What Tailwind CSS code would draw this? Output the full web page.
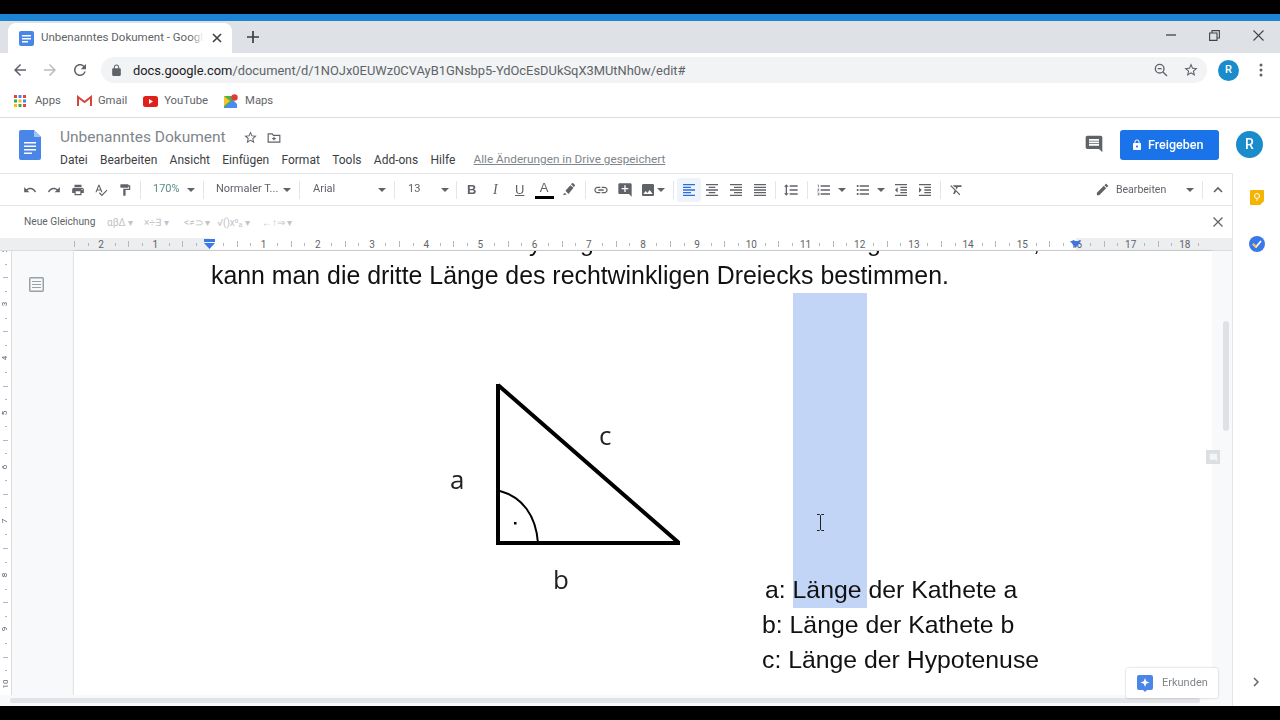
<!DOCTYPE html>
<html lang="de">
<head>
  <meta charset="UTF-8" />
  <title>Unbenanntes Dokument - Google Docs</title>
  <script src="https://cdn.jsdelivr.net/npm/@tailwindcss/browser@4"></script>
</head>
<body class="bg-black overflow-hidden">
<div class="w-[1280px] h-[720px] flex flex-col font-['Roboto',sans-serif] text-[#444746] overflow-hidden blur-[0.35px]">

  <!-- video letterbox + window edge -->
  <div class="h-[14px] bg-black shrink-0"></div>
  <div class="h-[7px] bg-[#1d83d4] shrink-0"></div>

  <!-- tab strip -->
  <div class="h-[32px] bg-[#dee1e6] flex shrink-0">
    <div class="ml-[8px] mt-[2px] w-[224px] h-[30px] bg-white rounded-t-lg flex items-center">
      <svg class="ml-[11px] w-[15px] h-[15px]" viewBox="0 0 15 15"><rect width="15" height="15" rx="2" fill="#4a86e8"/><path d="M3 4h9v1.4H3zM3 7h9v1.4H3zM3 10h6v1.4H3z" fill="#fff"/></svg>
      <span class="relative ml-[7px] w-[163px] text-[11.5px] text-[#5f6368] whitespace-nowrap overflow-hidden">Unbenanntes Dokument - Googl<span class="absolute right-0 top-0 bottom-0 w-[14px] bg-linear-to-r from-white/0 to-white"></span></span>
      <svg class="ml-[8px] w-[10px] h-[10px]" viewBox="0 0 10 10"><path d="M1 1l8 8M9 1l-8 8" stroke="#3c4043" stroke-width="1.6"/></svg>
    </div>
    <svg class="ml-[15px] mt-[10px] w-[12px] h-[12px]" viewBox="0 0 12 12"><path d="M6 0v12M0 6h12" stroke="#3c4043" stroke-width="1.7"/></svg>
    <div class="ml-auto flex items-start">
      <svg class="mt-[13px] w-[10px] h-[2px]" viewBox="0 0 10 2"><path d="M0 1h10" stroke="#444" stroke-width="1.3"/></svg>
      <svg class="ml-[33px] mt-[9px] w-[11px] h-[11px]" viewBox="0 0 11 11"><path d="M.6 3h7.4v7.4H.6zM3 3V.6h7.4V8H8" fill="none" stroke="#444" stroke-width="1.1"/></svg>
      <svg class="ml-[33px] mr-[16px] mt-[9px] w-[11px] h-[11px]" viewBox="0 0 11 11"><path d="M.5.5l10 10M10.5.5l-10 10" stroke="#444" stroke-width="1.1"/></svg>
    </div>
  </div>

  <!-- address bar -->
  <div class="h-[34px] bg-white flex items-center shrink-0">
    <svg class="ml-[11px] w-[18px] h-[18px]" viewBox="0 0 24 24" fill="#5f6368"><path d="M20 11H7.83l5.59-5.59L12 4l-8 8 8 8 1.41-1.41L7.83 13H20v-2z"/></svg>
    <svg class="ml-[12px] w-[18px] h-[18px]" viewBox="0 0 24 24" fill="#babcbe"><path d="M12 4l-1.41 1.41L16.17 11H4v2h12.17l-5.58 5.59L12 20l8-8z"/></svg>
    <svg class="ml-[12px] w-[18px] h-[18px]" viewBox="0 0 24 24" fill="#5f6368"><path d="M17.65 6.35C16.2 4.9 14.21 4 12 4c-4.42 0-7.99 3.58-7.99 8s3.57 8 7.99 8c3.73 0 6.84-2.55 7.73-6h-2.08c-.82 2.33-3.04 4-5.65 4-3.31 0-6-2.69-6-6s2.69-6 6-6c1.66 0 3.14.69 4.22 1.78L13 11h7V4l-2.35 2.35z"/></svg>
    <div class="ml-[12px] w-[1106px] h-[26px] rounded-full bg-[#f1f3f4] flex items-center">
      <svg class="ml-[9px] w-[13px] h-[13px]" viewBox="0 0 24 24" fill="#5f6368"><path d="M18 8h-1V6c0-2.76-2.24-5-5-5S7 3.24 7 6v2H6c-1.1 0-2 .9-2 2v10c0 1.1.9 2 2 2h12c1.1 0 2-.9 2-2V10c0-1.1-.9-2-2-2zm-2.900 0H8.900V6c0-1.71 1.39-3.100 3.100-3.100 1.71 0 3.100 1.390 3.100 3.100v2z"/></svg>
      <span class="ml-[10px] pt-[1px] text-[12.9px] text-[#5f6368] whitespace-nowrap"><span class="text-[#202124]">docs.google.com</span>/document/d/1NOJx0EUWz0CVAyB1GNsbp5-YdOcEsDUkSqX3MUtNh0w/edit#</span>
      <svg class="ml-auto w-[16px] h-[16px]" viewBox="0 0 24 24" fill="none" stroke="#5f6368" stroke-width="2"><circle cx="10" cy="10" r="6.500"/><path d="M7 10h6M15 15l6 6"/></svg>
      <svg class="ml-[14px] mr-[8px] w-[16px] h-[16px]" viewBox="0 0 24 24" fill="#5f6368"><path d="M22 9.240l-7.190-.62L12 2 9.190 8.630 2 9.240l5.460 4.730L5.820 21 12 17.270 18.180 21l-1.630-7.030L22 9.240zM12 15.400l-3.760 2.270 1-4.280-3.320-2.880 4.380-.38L12 6.100l1.710 4.040 4.380.38-3.320 2.880 1 4.280L12 15.400z"/></svg>
    </div>
    <div class="ml-[11px] w-[21px] h-[21px] rounded-full bg-[#1a8ccb] text-white text-[11px] font-medium flex items-center justify-center">R</div>
    <svg class="ml-[20px] w-[4px] h-[14px]" viewBox="0 0 4 14" fill="#5f6368"><circle cx="2" cy="2" r="1.500"/><circle cx="2" cy="7" r="1.500"/><circle cx="2" cy="12" r="1.500"/></svg>
  </div>

  <!-- bookmarks -->
  <div class="h-[31px] bg-white border-b border-[#dadce0] flex items-center text-[11.3px] text-[#5f6368] shrink-0 pb-[2px]">
    <svg class="ml-[14px] w-[12px] h-[12px]" viewBox="0 0 12 12"><path d="M0 0h3v3H0z" fill="#ea4335"/><path d="M4.500 0h3v3h-3z" fill="#4285f4"/><path d="M9 0h3v3H9z" fill="#ea4335"/><path d="M0 4.500h3v3H0z" fill="#34a853"/><path d="M4.500 4.500h3v3h-3z" fill="#fbbc05"/><path d="M9 4.500h3v3H9z" fill="#4285f4"/><path d="M0 9h3v3H0z" fill="#fbbc05"/><path d="M4.500 9h3v3h-3z" fill="#34a853"/><path d="M9 9h3v3H9z" fill="#ea4335"/></svg>
    <span class="ml-[9px]">Apps</span>
    <svg class="ml-[16px] w-[15px] h-[12px]" viewBox="0 0 15 12" fill="none"><path d="M1 11V2l6.500 5L14 2v9" stroke="#d6453d" stroke-width="2"/></svg>
    <span class="ml-[6px]">Gmail</span>
    <svg class="ml-[16px] w-[15px] h-[11px]" viewBox="0 0 15 11"><rect width="15" height="11" rx="2.500" fill="#e0201b"/><path d="M6 3v5l4-2.500z" fill="#fff"/></svg>
    <span class="ml-[6px]">YouTube</span>
    <svg class="ml-[16px] w-[14px] h-[14px]" viewBox="0 0 14 14"><path d="M0 2h9v12H0z" fill="#4caf50"/><path d="M0 14L9 6l4 4v4z" fill="#4a8af4"/><path d="M0 2l6 5-6 5z" fill="#fbc02d"/><circle cx="10.500" cy="3.500" r="3.200" fill="#e53935"/></svg>
    <span class="ml-[7px]">Maps</span>
  </div>

  <!-- docs header -->
  <div class="h-[55px] bg-white flex shrink-0">
    <svg class="ml-[19px] mt-[12px] w-[22px] h-[30px]" viewBox="0 0 22 30"><path d="M2 0h13l7 7v21a2 2 0 0 1-2 2H2a2 2 0 0 1-2-2V2a2 2 0 0 1 2-2z" fill="#4a86e8"/><path d="M15 0l7 7h-7z" fill="#a1c2fa"/><path d="M5 12h12v1.500H5zM5 15.500h12V17H5zM5 19h12v1.500H5zM5 22.500h8V24H5z" fill="#fff"/></svg>
    <div class="ml-[19px] flex flex-col">
      <div class="flex items-center h-[19px] mt-[10px]">
        <span class="text-[15.5px] text-[#80868b]">Unbenanntes Dokument</span>
        <svg class="ml-[17px] w-[15px] h-[15px]" viewBox="0 0 24 24" fill="#5f6368"><path d="M22 9.240l-7.190-.62L12 2 9.190 8.630 2 9.240l5.460 4.730L5.820 21 12 17.270 18.180 21l-1.630-7.030L22 9.240zM12 15.400l-3.760 2.270 1-4.280-3.320-2.880 4.380-.38L12 6.100l1.710 4.040 4.380.38-3.320 2.880 1 4.280L12 15.400z"/></svg>
        <svg class="ml-[9px] w-[14px] h-[14px]" viewBox="0 0 24 24" fill="none" stroke="#5f6368" stroke-width="2"><path d="M2 5h7l2 2.500h11V19H2zM12 10v6M9 13h6"/></svg>
      </div>
      <div class="flex items-center mt-[4px] text-[12px] text-[#3c4043] gap-[12.3px]">
        <span>Datei</span><span>Bearbeiten</span><span>Ansicht</span><span>Einfügen</span><span>Format</span><span>Tools</span><span>Add-ons</span><span>Hilfe</span>
        <span class="ml-[6px] text-[11.75px] text-[#80868b] underline">Alle Änderungen in Drive gespeichert</span>
      </div>
    </div>
    <div class="ml-auto flex items-start">
      <svg class="mt-[16px] w-[20px] h-[20px]" viewBox="0 0 24 24" fill="#5f6368"><path d="M21.990 4c0-1.100-.89-2-1.990-2H4c-1.100 0-2 .9-2 2v12c0 1.100.9 2 2 2h14l4 4-.01-18zM18 14H6v-2h12v2zm0-3H6V9h12v2zm0-3H6V6h12v2z"/></svg>
      <div class="ml-[16px] mt-[12px] w-[99px] h-[30px] bg-[#1a73e8] rounded-[3px] flex items-center text-white text-[12.500px] font-medium">
        <svg class="ml-[11px] w-[12px] h-[12px]" viewBox="0 0 24 24" fill="#fff"><path d="M18 8h-1V6c0-2.760-2.240-5-5-5S7 3.240 7 6v2H6c-1.100 0-2 .9-2 2v10c0 1.100.9 2 2 2h12c1.100 0 2-.9 2-2V10c0-1.100-.9-2-2-2zm-6 9c-1.100 0-2-.9-2-2s.9-2 2-2 2 .9 2 2-.9 2-2 2zm3.100-9H8.900V6c0-1.710 1.390-3.100 3.100-3.100 1.710 0 3.100 1.390 3.100 3.100v2z"/></svg>
        <span class="ml-[5px]">Freigeben</span>
      </div>
      <div class="ml-[17px] mr-[17px] mt-[13px] w-[27px] h-[27px] rounded-full bg-[#1a8ccb] text-white text-[14px] font-medium flex items-center justify-center">R</div>
    </div>
  </div>

  <!-- main row: editor column + side panel -->
  <div class="flex-1 flex min-h-0">
    <div class="w-[1233px] flex flex-col border-r border-[#e3e5e8] min-h-0">

      <!-- toolbar -->
      <div class="h-[33px] border-y border-[#e3e5e8] bg-white flex items-center text-[11px] text-[#5f6368] shrink-0">
        <svg class="ml-[23px] w-[14px] h-[14px]" viewBox="0 0 24 24" fill="#5f6368"><path d="M12.500 8c-2.650 0-5.050.99-6.900 2.600L2 7v9h9l-3.620-3.620c1.390-1.160 3.160-1.880 5.120-1.880 3.540 0 6.550 2.310 7.600 5.500l2.370-.78C21.080 11.030 17.150 8 12.500 8z"/></svg>
        <svg class="ml-[10px] w-[14px] h-[14px]" viewBox="0 0 24 24" fill="#5f6368"><path d="M18.400 10.600C16.550 8.990 14.150 8 11.500 8c-4.650 0-8.580 3.030-9.960 7.220L3.900 16c1.050-3.190 4.050-5.500 7.600-5.500 1.950 0 3.730.72 5.120 1.880L13 16h9V7l-3.600 3.600z"/></svg>
        <svg class="ml-[10px] w-[14px] h-[14px]" viewBox="0 0 24 24" fill="#5f6368"><path d="M19 8H5c-1.660 0-3 1.340-3 3v6h4v4h12v-4h4v-6c0-1.660-1.340-3-3-3zm-3 11H8v-5h8v5zm3-7c-.55 0-1-.45-1-1s.45-1 1-1 1 .45 1 1-.45 1-1 1zm-1-9H6v4h12V3z"/></svg>
        <svg class="ml-[9px] w-[14px] h-[14px]" viewBox="0 0 24 24" fill="#5f6368"><path d="M12.450 16h2.090L9.430 3H7.570L2.460 16h2.090l1.120-3h5.640l1.140 3zm-6.020-5L8.500 5.480 10.570 11H6.430zm15.160.59l-8.090 8.090L9.830 16l-1.410 1.410 5.090 5.090L23 13l-1.410-1.410z"/></svg>
        <svg class="ml-[10px] w-[14px] h-[14px]" viewBox="0 0 24 24" fill="#5f6368"><path d="M18 4V3c0-.55-.45-1-1-1H5c-.55 0-1 .45-1 1v4c0 .55.45 1 1 1h12c.55 0 1-.45 1-1V6h1v4H9v11c0 .55.45 1 1 1h2c.55 0 1-.45 1-1v-9h8V4h-3z"/></svg>
        <span class="ml-[8px] w-px h-[18px] bg-[#e3e5e8]"></span>
        <span class="ml-[12px] w-[25px] text-[#5f8a8b]">170%</span>
        <span class="ml-[9px] border-x-[4px] border-t-[4px] border-x-transparent border-t-[#5f6368]"></span>
        <span class="ml-[8px] w-px h-[18px] bg-[#e3e5e8]"></span>
        <span class="ml-[12px] w-[62px] whitespace-nowrap">Normaler T...</span>
        <span class="ml-[5px] border-x-[4px] border-t-[4px] border-x-transparent border-t-[#5f6368]"></span>
        <span class="ml-[8px] w-px h-[18px] bg-[#e3e5e8]"></span>
        <span class="ml-[13px] w-[62px]">Arial</span>
        <span class="ml-[3px] border-x-[4px] border-t-[4px] border-x-transparent border-t-[#5f6368]"></span>
        <span class="ml-[8px] w-px h-[18px] bg-[#e3e5e8]"></span>
        <span class="ml-[13px] w-[26px]">13</span>
        <span class="ml-[7px] border-x-[4px] border-t-[4px] border-x-transparent border-t-[#5f6368]"></span>
        <span class="ml-[7px] w-px h-[18px] bg-[#e3e5e8]"></span>
        <span class="ml-[10px] w-[8px] text-[13px] font-bold font-['Liberation_Sans',sans-serif]">B</span>
        <span class="ml-[18px] w-[8px] text-[14px] italic font-['Liberation_Serif',serif]">I</span>
        <span class="ml-[14px] w-[9px] text-[13px] underline font-['Liberation_Sans',sans-serif]">U</span>
        <span class="ml-[10px] w-[20px] h-[20px] flex flex-col items-center text-[13px] leading-[15px] font-['Liberation_Sans',sans-serif]">A<span class="w-[19px] h-[3px] bg-black mt-[1px]"></span></span>
        <svg class="ml-[7px] w-[15px] h-[15px]" viewBox="0 0 24 24" fill="#5f6368"><path d="M3 21l3-4 3 3zM7 14l8-9 5 4-8 10z M16 3.500l1.500-1.500a1.500 1.500 0 0 1 2 0l2.500 2.500a1.500 1.500 0 0 1 0 2L20.500 8z"/></svg>
        <span class="ml-[9px] w-px h-[18px] bg-[#e3e5e8]"></span>
        <svg class="ml-[7px] w-[16px] h-[16px]" viewBox="0 0 24 24" fill="#5f6368"><path d="M3.900 12c0-1.710 1.390-3.100 3.100-3.100h4V7H7c-2.760 0-5 2.240-5 5s2.240 5 5 5h4v-1.900H7c-1.710 0-3.100-1.390-3.100-3.100zM8 13h8v-2H8v2zm9-6h-4v1.900h4c1.710 0 3.100 1.390 3.100 3.100s-1.390 3.100-3.100 3.100h-4V17h4c2.760 0 5-2.240 5-5s-2.240-5-5-5z"/></svg>
        <svg class="ml-[8px] w-[16px] h-[16px]" viewBox="0 0 24 24" fill="#5f6368"><path d="M21.990 4c0-1.100-.89-2-1.990-2H4c-1.100 0-2 .9-2 2v12c0 1.100.9 2 2 2h14l4 4-.01-18zM17 11h-4v4h-2v-4H7V9h4V5h2v4h4v2z"/></svg>
        <svg class="ml-[7px] w-[16px] h-[16px]" viewBox="0 0 24 24" fill="#5f6368"><path d="M21 19V5c0-1.100-.9-2-2-2H5c-1.100 0-2 .9-2 2v14c0 1.100.9 2 2 2h14c1.100 0 2-.9 2-2zM8.500 13.500l2.500 3.010L14.500 12l4.500 6H5l3.500-4.500z"/></svg>
        <span class="ml-[1px] border-x-[4px] border-t-[4px] border-x-transparent border-t-[#5f6368]"></span>
        <span class="ml-[8px] w-px h-[18px] bg-[#e3e5e8]"></span>
        <span class="ml-[3px] w-[24px] h-[24px] rounded-[3px] bg-[#eef3fc] flex items-center justify-center">
          <svg class="w-[16px] h-[16px]" viewBox="0 0 24 24" fill="#2a6fd6"><path d="M15 15H3v2h12v-2zm0-8H3v2h12V7zM3 13h18v-2H3v2zm0 8h18v-2H3v2zM3 3v2h18V3H3z"/></svg>
        </span>
        <svg class="ml-[3px] w-[16px] h-[16px]" viewBox="0 0 24 24" fill="#5f6368"><path d="M7 15v2h10v-2H7zm-4 6h18v-2H3v2zm0-8h18v-2H3v2zm4-6v2h10V7H7zM3 3v2h18V3H3z"/></svg>
        <svg class="ml-[8px] w-[16px] h-[16px]" viewBox="0 0 24 24" fill="#5f6368"><path d="M3 21h18v-2H3v2zm6-4h12v-2H9v2zm-6-4h18v-2H3v2zm6-4h12V7H9v2zM3 3v2h18V3H3z"/></svg>
        <svg class="ml-[8px] w-[16px] h-[16px]" viewBox="0 0 24 24" fill="#5f6368"><path d="M3 21h18v-2H3v2zm0-4h18v-2H3v2zm0-4h18v-2H3v2zm0-4h18V7H3v2zm0-6v2h18V3H3z"/></svg>
        <span class="ml-[7px] w-px h-[18px] bg-[#e3e5e8]"></span>
        <svg class="ml-[7px] w-[16px] h-[16px]" viewBox="0 0 24 24" fill="#5f6368"><path d="M6 7h2.500L5 3.500 1.500 7H4v10H1.500L5 20.500 8.500 17H6V7zm4-2v2h12V5H10zm0 14h12v-2H10v2zm0-6h12v-2H10v2z"/></svg>
        <span class="ml-[8px] w-px h-[18px] bg-[#e3e5e8]"></span>
        <svg class="ml-[8px] w-[16px] h-[16px]" viewBox="0 0 24 24" fill="#5f6368"><path d="M2 17h2v.5H3v1h1v.5H2v1h3v-4H2v1zm1-9h1V4H2v1h1v3zm-1 3h1.800L2 13.100v.9h3v-1H3.200L5 10.900V10H2v1zm5-6v2h14V5H7zm0 14h14v-2H7v2zm0-6h14v-2H7v2z"/></svg>
        <span class="ml-[6px] border-x-[4px] border-t-[4px] border-x-transparent border-t-[#5f6368]"></span>
        <svg class="ml-[9px] w-[16px] h-[16px]" viewBox="0 0 24 24" fill="#5f6368"><path d="M4 10.500c-.83 0-1.500.67-1.500 1.500s.67 1.500 1.500 1.500 1.500-.67 1.500-1.500-.67-1.500-1.500-1.500zm0-6c-.83 0-1.500.67-1.500 1.500S3.170 7.500 4 7.500 5.500 6.830 5.500 6 4.830 4.500 4 4.500zm0 12c-.83 0-1.500.68-1.500 1.500s.68 1.500 1.500 1.500 1.500-.68 1.500-1.500-.67-1.500-1.500-1.500zM7 19h14v-2H7v2zm0-6h14v-2H7v2zm0-8v2h14V5H7z"/></svg>
        <span class="ml-[6px] border-x-[4px] border-t-[4px] border-x-transparent border-t-[#5f6368]"></span>
        <svg class="ml-[8px] w-[16px] h-[16px]" viewBox="0 0 24 24" fill="#5f6368"><path d="M11 17h10v-2H11v2zm-8-5l4 4V8l-4 4zm0 9h18v-2H3v2zM3 3v2h18V3H3zm8 6h10V7H11v2zm0 4h10v-2H11v2z"/></svg>
        <svg class="ml-[8px] w-[16px] h-[16px]" viewBox="0 0 24 24" fill="#5f6368"><path d="M3 21h18v-2H3v2zM3 8v8l4-4-4-4zm8 9h10v-2H11v2zM3 3v2h18V3H3zm8 6h10V7H11v2zm0 4h10v-2H11v2z"/></svg>
        <span class="ml-[7px] w-px h-[18px] bg-[#e3e5e8]"></span>
        <svg class="ml-[8px] w-[15px] h-[15px]" viewBox="0 0 24 24" fill="#5f6368"><path d="M3.270 5L2 6.270l6.970 6.970L6.500 19h3l1.570-3.660L16.730 21 18 19.730 3.550 5.270 3.270 5zM6 5v.18L8.820 8h2.400l-.72 1.680 2.100 2.100L14.210 8H20V5H6z"/></svg>
        <svg class="ml-auto w-[15px] h-[15px]" viewBox="0 0 24 24" fill="#5f6368"><path d="M3 17.250V21h3.750L17.810 9.940l-3.750-3.750L3 17.250zM20.710 7.040c.39-.39.39-1.020 0-1.410l-2.340-2.340c-.39-.39-1.020-.39-1.410 0l-1.830 1.830 3.750 3.750 1.830-1.830z"/></svg>
        <span class="ml-[6px] w-[57px] text-[10.500px]">Bearbeiten</span>
        <span class="ml-[13px] border-x-[4px] border-t-[4px] border-x-transparent border-t-[#5f6368]"></span>
        <span class="ml-[8px] w-px h-[18px] bg-[#e3e5e8]"></span>
        <svg class="ml-[10px] mr-[9px] w-[10px] h-[7px]" viewBox="0 0 10 7" fill="none"><path d="M1 6l4-4 4 4" stroke="#5f6368" stroke-width="1.600"/></svg>
      </div>

      <!-- equation bar -->
      <div class="h-[32px] bg-white flex items-center text-[10.200px] shrink-0">
        <span class="ml-[24px] w-[83px] text-[#5f6368]">Neue Gleichung</span>
        <span class="w-[37px] text-[#c0c3c7] text-[10px] whitespace-nowrap">αβΔ ▾</span>
        <span class="w-[40px] text-[#c0c3c7] text-[10px] whitespace-nowrap">×÷∃ ▾</span>
        <span class="w-[33px] text-[#c0c3c7] text-[10px] whitespace-nowrap">&lt;≠⊃ ▾</span>
        <span class="w-[45px] text-[#c0c3c7] text-[10px] whitespace-nowrap">√()x⁰ₐ ▾</span>
        <span class="text-[#c0c3c7] text-[10px] whitespace-nowrap">←↑⇒ ▾</span>
        <svg class="ml-auto mr-[9px] w-[10px] h-[10px]" viewBox="0 0 10 10"><path d="M.5.5l9 9M9.500.5l-9 9" stroke="#5f6368" stroke-width="1.300"/></svg>
      </div>

      <!-- horizontal ruler -->
      <div class="h-[13px] flex bg-[#eceef0] border-b border-[#dadce0] shrink-0 overflow-hidden">
        <div class="w-[74px]"></div>
        <div id="ruler" class="relative flex-1 flex items-center text-[10px] text-[#5f6368]"></div>
      </div>

      <!-- document viewport -->
      <div class="flex-1 flex min-h-0 relative">
        <!-- vertical ruler -->
        <div id="vruler" class="w-[12px] bg-white border-r border-[#dadce0] flex flex-col items-center overflow-hidden text-[8px] text-[#5f6368]"></div>
        <!-- outline gutter -->
        <div class="w-[62px] bg-[#f8f9fa] flex">
          <svg class="mt-[26px] ml-[17px] w-[15px] h-[15px]" viewBox="0 0 15 15" fill="none" stroke="#9aa0a6"><rect x=".75" y=".75" width="13.500" height="13.500" rx="1" stroke-width="1.500"/><path d="M3 4.500h9M3 7.500h9M3 10.500h9"/></svg>
        </div>
        <!-- page -->
        <div class="relative w-[1138px] bg-white shadow-[0_0_2px_rgba(0,0,0,0.25)] flex flex-col items-start overflow-hidden font-['Liberation_Sans',sans-serif] text-[#111]">
          <!-- selection highlight -->
          <div class="absolute left-[719px] top-[42px] w-[74px] h-[315px] bg-[#c2d5f6]"></div>
          <!-- previous line, only its descenders are still in view -->
          <div class="absolute left-0 top-0 w-full h-[6px] overflow-hidden text-[24.800px] leading-[28px]">
            <span class="absolute left-[455px] top-[-22px]">y</span>
            <span class="absolute left-[506px] top-[-22px]">g</span>
            <span class="absolute left-[793px] top-[-22px]">g</span>
            <span class="absolute left-[959px] top-[-22px]">,</span>
          </div>
          <p class="relative mt-[10px] ml-[137px] text-[24.870px] leading-[28px] whitespace-nowrap">kann man die dritte Länge des rechtwinkligen Dreiecks bestimmen.</p>
          <!-- triangle picture -->
          <svg class="absolute left-[360px] top-[122px] w-[260px] h-[225px]" viewBox="0 0 260 225">
            <path d="M64 11v159M62 170h184M64 12l181 158" fill="none" stroke="#000" stroke-width="4"/>
            <path d="M66 118c22 6 36 24 38 52" fill="none" stroke="#000" stroke-width="2"/>
            <rect x="80" y="149" width="2.500" height="2.500" fill="#000"/>
            <text x="16" y="116" font-family="Open Sans, sans-serif" font-size="26" fill="#222">a</text>
            <text x="165" y="72" font-family="Open Sans, sans-serif" font-size="26" fill="#222">c</text>
            <text x="119" y="216" font-family="Open Sans, sans-serif" font-size="26" fill="#222">b</text>
          </svg>
          <!-- legend -->
          <div class="relative mt-[283px] ml-[688px] text-[24.800px] leading-[35px] whitespace-nowrap">
            <p class="ml-[3px]">a: Länge der Kathete a</p>
            <p>b: Länge der Kathete b</p>
            <p>c: Länge der Hypotenuse</p>
          </div>
          <!-- text cursor -->
          <svg class="absolute left-[742px] top-[263px] w-[9px] h-[17px]" viewBox="0 0 9 17" fill="none" stroke="#222" stroke-width="1"><path d="M1 .5h2.500l1 1 1-1H8M4.500 1.500v14M1 16.500h2.500l1-1 1 1H8"/></svg>
        </div>
        <!-- scroll gutter -->
        <div class="flex-1 bg-[#f8f9fa] relative">
          <div class="absolute right-[3px] top-[70px] w-[6px] h-[110px] bg-[#dfe1e4] rounded-full"></div>
        </div>
        <!-- comment tab -->
        <div class="absolute left-[1206px] top-[199px] w-[14px] h-[14px] bg-[#dcdfe2] flex items-center justify-center">
          <svg class="w-[9px] h-[9px]" viewBox="0 0 24 24" fill="#f4f5f6"><path d="M22 4c0-1.100-.9-2-2-2H4c-1.100 0-2 .9-2 2v12c0 1.100.9 2 2 2h14l4 4z"/></svg>
        </div>
        <!-- horizontal scrollbar -->
        <div class="absolute left-0 right-0 bottom-0 h-[11px] bg-[#f8f9fa] flex items-center">
          <div class="ml-[10px] w-[1190px] h-[5px] bg-[#e1e3e6] rounded-full"></div>
        </div>
        <!-- explore button -->
        <div class="absolute left-[1126px] bottom-[8px] w-[92px] h-[30px] bg-white/95 rounded-[3px] shadow-[0_0_2px_rgba(0,0,0,0.3)] flex items-center">
          <svg class="ml-[11px] w-[16px] h-[17px]" viewBox="0 0 16 17"><path d="M2 0h12a2 2 0 0 1 2 2v11a2 2 0 0 1-2 2h-4l-2 2-2-2H2a2 2 0 0 1-2-2V2a2 2 0 0 1 2-2z" fill="#4a86e8"/><path d="M8 3l1.200 3.300L12.500 7.500 9.200 8.700 8 12 6.800 8.700 3.500 7.500 6.800 6.300z" fill="#fff"/></svg>
          <span class="ml-[9px] mt-[1px] text-[11px] text-[#80868b]">Erkunden</span>
        </div>
      </div>
    </div>

    <!-- side panel -->
    <div class="flex-1 bg-white flex flex-col items-center relative">
      <svg class="mt-[17px] w-[14px] h-[15px]" viewBox="0 0 14 15"><path d="M1 0h12a1 1 0 0 1 1 1v10l-4 4H1a1 1 0 0 1-1-1V1a1 1 0 0 1 1-1z" fill="#f4b400"/><circle cx="7" cy="6" r="2.500" fill="none" stroke="#fff" stroke-width="1"/><path d="M6 10h2" stroke="#fff"/></svg>
      <svg class="mt-[31px] w-[16px] h-[16px]" viewBox="0 0 16 16"><circle cx="8" cy="8" r="8" fill="#3b78e7"/><path d="M4 8l3 3 5-6" fill="none" stroke="#fff" stroke-width="1.800"/><path d="M4 8l3 3" stroke="#fbc02d" stroke-width="1.800"/></svg>
      <svg class="absolute left-[20px] bottom-[19px] w-[6px] h-[10px]" viewBox="0 0 6 10" fill="none"><path d="M1 1l4 4-4 4" stroke="#5f6368" stroke-width="1.500"/></svg>
    </div>
  </div>

  <!-- bottom letterbox -->
  <div class="h-[14px] bg-black shrink-0"></div>
</div>

<script>
  // rulers: one inch = 54.2px in the reference
  const ruler = document.getElementById('ruler');
  const nums = ['2', '1', '', '1', '2', '3', '4', '5', '6', '7', '8', '9', '10', '11', '12', '13', '14', '15', '16', '17', '18'];
  ruler.innerHTML =
    '<div class="absolute left-[136px] top-0 bottom-0 w-[866px] bg-white"></div>' +
    nums.map(n => `
      <div class="relative w-[54.2px] h-full shrink-0 flex items-center">
        <span class="absolute left-0 w-px h-[6px] bg-[#b4b7bb]"></span>
        <span class="absolute left-[13.500px] w-px h-[3px] bg-[#b4b7bb]"></span>
        <span class="absolute left-0 right-0 text-center">${n}</span>
        <span class="absolute left-[40.500px] w-px h-[3px] bg-[#b4b7bb]"></span>
      </div>`).join('') +
    '<svg class="absolute left-[130px] top-[1px] w-[11px] h-[10px]" viewBox="0 0 11 10"><path d="M0 0h11v3H0z" fill="#3b78e7"/><path d="M0 4h11L5.500 10z" fill="#3b78e7"/></svg>' +
    '<svg class="absolute left-[996px] top-[3px] w-[11px] h-[7px]" viewBox="0 0 11 7"><path d="M0 0h11L5.500 7z" fill="#3b78e7"/></svg>';

  const vruler = document.getElementById('vruler');
  vruler.innerHTML = ['2', '3', '4', '5', '6', '7', '8', '9', '10'].map((n, i) => `
    <div class="relative w-full h-[54.2px] shrink-0 ${i === 0 ? 'mt-[-28px]' : ''} flex items-center justify-center">
      <span class="-rotate-90">${n}</span>
      <span class="absolute top-0 left-[3px] w-[5px] h-px bg-[#b4b7bb]"></span>
      <span class="absolute top-[13.500px] left-[5px] w-[2px] h-px bg-[#b4b7bb]"></span>
      <span class="absolute top-[40.500px] left-[5px] w-[2px] h-px bg-[#b4b7bb]"></span>
    </div>`).join('');
</script>
</body>
</html>
